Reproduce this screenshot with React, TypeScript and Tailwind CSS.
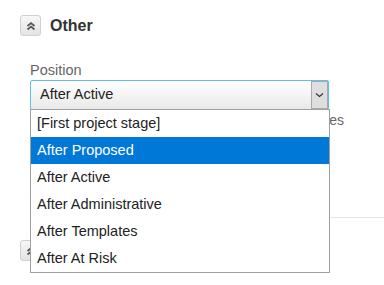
import { useState } from 'react';

const stages = [
  '[First project stage]',
  'After Proposed',
  'After Active',
  'After Administrative',
  'After Templates',
  'After At Risk',
];

const CollapseButton = () => (
  <button className="flex h-[21px] w-[21px] items-center justify-center rounded-[3px] border border-[#d0d0d0] bg-gradient-to-b from-[#f7f7f7] to-[#e4e4e4]">
    <svg width="10" height="10" viewBox="0 0 10 10" fill="none" stroke="#555" strokeWidth="1.7">
      <path d="M1.5 5 L5 2 L8.5 5" />
      <path d="M1.5 8.5 L5 5.5 L8.5 8.5" />
    </svg>
  </button>
);

const App = () => {
  const [selected] = useState('After Active');
  const [highlighted, setHighlighted] = useState(1);

  return (
    <div className="relative h-[285px] w-[384px] overflow-hidden bg-white font-['Liberation_Sans',Arial,sans-serif] text-[#333]">
      <div className="flex items-center gap-[9px] pl-5 pt-[15px]">
        <CollapseButton />
        <span className="text-[16px] font-bold leading-[21px] text-[#333]">Other</span>
      </div>

      <div className="mt-[26px] pl-[30px]">
        <div className="text-[14.5px] leading-[16px] text-[#666]">Position</div>
        <div className="relative mt-[2px] w-[299px]">
          <div className="flex h-[30px] items-stretch rounded-[2px] border border-[#5bc0ee] bg-gradient-to-b from-white to-[#e9e9e9]">
            <span className="flex flex-1 items-center pl-[9px] text-[14.5px] text-[#222]">{selected}</span>
            <span className="flex w-[17px] items-center justify-center border border-[#a9a9a9] bg-[#dedede]">
              <svg width="9" height="6" viewBox="0 0 9 6" fill="none" stroke="#333" strokeWidth="1.2">
                <path d="M1 1.5 L4.5 4.5 L8 1.5" />
              </svg>
            </span>
          </div>

          <ul className="absolute left-0 top-[29px] z-10 w-[300px] border border-[#a0a0a0] bg-white">
            {stages.map((stage, index) => (
              <li
                key={stage}
                onMouseEnter={() => setHighlighted(index)}
                className={`flex h-[27px] items-center pl-[6px] text-[14.5px] ${
                  index === highlighted ? 'bg-[#0078d7] text-white' : 'text-[#222]'
                }`}
              >
                {stage}
              </li>
            ))}
          </ul>
        </div>
        <div className="w-[314px] text-right text-[14px] leading-[20px] text-[#666]">stages</div>
      </div>

      <div className="ml-[30px] mt-[87px] border-t border-[#e5e5e5]" />

      <div className="flex items-center pl-5 pt-[22px]">
        <CollapseButton />
      </div>
    </div>
  );
};

export default App;
